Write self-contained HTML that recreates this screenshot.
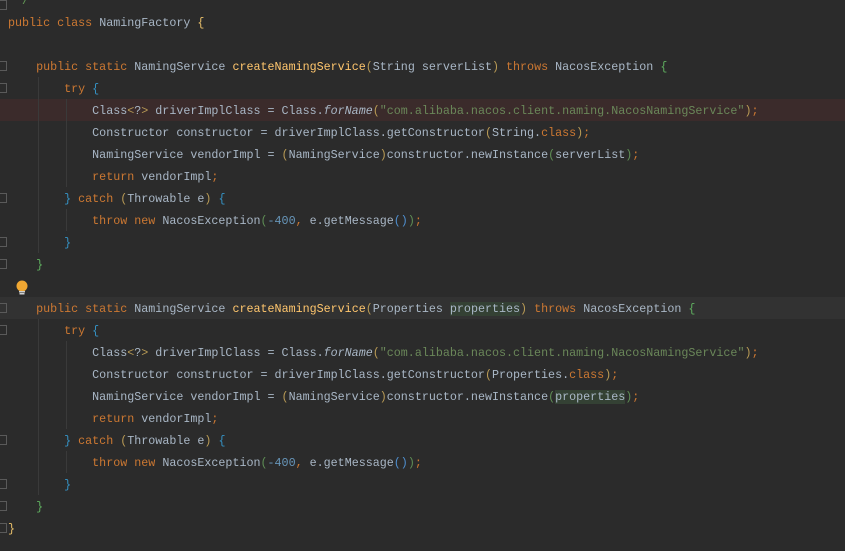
<!DOCTYPE html>
<html><head><meta charset="utf-8"><style>
html,body{margin:0;padding:0;background:#2b2b2b;width:845px;height:551px;overflow:hidden;position:relative}
.code{position:absolute;left:8px;top:-10px;margin:0;font-family:"Liberation Mono","Noto Sans CJK SC",monospace;font-size:11.7px;line-height:22px;color:#a9b7c6;white-space:pre}
.k{color:#cc7832}.m{color:#ffc66d}.s{color:#6a8759}.n{color:#6897bb}.i{font-style:italic}.c{color:#629755}
.y{color:#e8bf6a}.g{color:#5fae5f}.b{color:#3592c4}.p1{color:#b89a55}.p2{color:#5f8f55}.p3{color:#4f8fcf}
.hl{background:#344134}
.row{position:absolute;left:0;width:845px;height:22px}
.guide{position:absolute;width:1px;background:#3a3a3a}
.fold{position:absolute;left:0;width:7px;height:10px;border:1px solid #5a5a5a;border-left:none;box-sizing:border-box}
</style></head><body>
<div class="row" style="top:99px;background:#3b2b2b"></div>
<div class="row" style="top:297px;background:#323232"></div>
<div class="guide" style="left:38px;top:77px;height:176px"></div>
<div class="guide" style="left:66px;top:99px;height:88px"></div>
<div class="guide" style="left:66px;top:209px;height:22px"></div>
<div class="guide" style="left:38px;top:319px;height:176px"></div>
<div class="guide" style="left:66px;top:341px;height:88px"></div>
<div class="guide" style="left:66px;top:451px;height:22px"></div>
<div class="fold" style="top:0px"></div>
<div class="fold" style="top:61px"></div>
<div class="fold" style="top:83px"></div>
<div class="fold" style="top:193px"></div>
<div class="fold" style="top:237px"></div>
<div class="fold" style="top:259px"></div>
<div class="fold" style="top:303px"></div>
<div class="fold" style="top:325px"></div>
<div class="fold" style="top:435px"></div>
<div class="fold" style="top:479px"></div>
<div class="fold" style="top:501px"></div>
<div class="fold" style="top:523px"></div>
<svg style="position:absolute;left:15px;top:280px" width="14" height="16"><circle cx="7" cy="6" r="5.5" fill="#f0a732"/><rect x="4" y="11" width="6" height="1.5" fill="#d0d0d0"/><rect x="4.5" y="13" width="5" height="1.5" fill="#d0d0d0"/></svg>
<pre class="code"><span class="c"> */</span>
<span class="k">public class </span>NamingFactory <span class="y">{</span>

    <span class="k">public static </span>NamingService <span class="m">createNamingService</span><span class="p1">(</span>String serverList<span class="p1">)</span> <span class="k">throws </span>NacosException <span class="g">{</span>
        <span class="k">try </span><span class="b">{</span>
            Class<span class="p1">&lt;</span>?<span class="p1">&gt;</span> driverImplClass = Class.<span class="i">forName</span><span class="p1">(</span><span class="s">"com.alibaba.nacos.client.naming.NacosNamingService"</span><span class="p1">)</span><span class="k">;</span>
            Constructor constructor = driverImplClass.getConstructor<span class="p1">(</span>String.<span class="k">class</span><span class="p1">)</span><span class="k">;</span>
            NamingService vendorImpl = <span class="p1">(</span>NamingService<span class="p1">)</span>constructor.newInstance<span class="p2">(</span>serverList<span class="p2">)</span><span class="k">;</span>
            <span class="k">return </span>vendorImpl<span class="k">;</span>
        <span class="b">}</span> <span class="k">catch </span><span class="p1">(</span>Throwable e<span class="p1">)</span> <span class="b">{</span>
            <span class="k">throw new </span>NacosException<span class="p2">(</span><span class="n">-400</span><span class="k">, </span>e.getMessage<span class="p3">()</span><span class="p2">)</span><span class="k">;</span>
        <span class="b">}</span>
    <span class="g">}</span>

    <span class="k">public static </span>NamingService <span class="m">createNamingService</span><span class="p1">(</span>Properties <span class="hl">properties</span><span class="p1">)</span> <span class="k">throws </span>NacosException <span class="g">{</span>
        <span class="k">try </span><span class="b">{</span>
            Class<span class="p1">&lt;</span>?<span class="p1">&gt;</span> driverImplClass = Class.<span class="i">forName</span><span class="p1">(</span><span class="s">"com.alibaba.nacos.client.naming.NacosNamingService"</span><span class="p1">)</span><span class="k">;</span>
            Constructor constructor = driverImplClass.getConstructor<span class="p1">(</span>Properties.<span class="k">class</span><span class="p1">)</span><span class="k">;</span>
            NamingService vendorImpl = <span class="p1">(</span>NamingService<span class="p1">)</span>constructor.newInstance<span class="p2">(</span><span class="hl">properties</span><span class="p2">)</span><span class="k">;</span>
            <span class="k">return </span>vendorImpl<span class="k">;</span>
        <span class="b">}</span> <span class="k">catch </span><span class="p1">(</span>Throwable e<span class="p1">)</span> <span class="b">{</span>
            <span class="k">throw new </span>NacosException<span class="p2">(</span><span class="n">-400</span><span class="k">, </span>e.getMessage<span class="p3">()</span><span class="p2">)</span><span class="k">;</span>
        <span class="b">}</span>
    <span class="g">}</span>
<span class="y">}</span>
</pre>
</body></html>
